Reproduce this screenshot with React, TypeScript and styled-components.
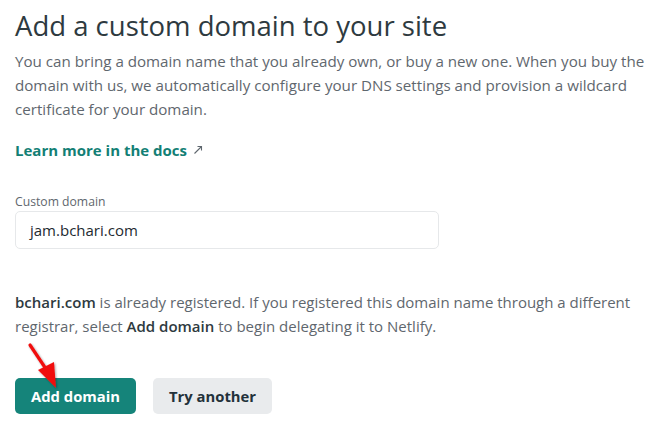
import React from "react";
import styled, { createGlobalStyle } from "styled-components";

const GlobalStyle = createGlobalStyle`
  html, body {
    margin: 0;
    padding: 0;
    background: #ffffff;
  }
  body {
    font-family: "Open Sans", "Noto Sans", sans-serif;
    -webkit-font-smoothing: antialiased;
  }
`;

const Page = styled.div`
  position: relative;
  width: 660px;
  height: 430px;
  padding: 8px 8px 0 15px;
  box-sizing: border-box;
  overflow: hidden;
`;

const Title = styled.h1`
  margin: 0;
  font-size: 27.5px;
  line-height: 36px;
  font-weight: 400;
  color: #2e3a40;
`;

const Lead = styled.p`
  margin: 5px 0 0 0;
  font-size: 15.15px;
  line-height: 24px;
  color: #5f676e;
`;

const DocsLink = styled.a`
  display: inline-flex;
  align-items: center;
  gap: 6px;
  margin-top: 17px;
  font-size: 15px;
  line-height: 24px;
  font-weight: 700;
  color: #137f75;
  text-decoration: none;
`;

const Field = styled.div`
  display: flex;
  flex-direction: column;
  margin-top: 31px;
  width: 424px;
`;

const Label = styled.label`
  font-size: 12.2px;
  line-height: 18px;
  color: #5f676e;
  margin-bottom: 0;
`;

const Input = styled.div`
  height: 38px;
  box-sizing: border-box;
  border: 1.5px solid #e6e8ea;
  border-radius: 5px;
  padding: 0 14px;
  display: flex;
  align-items: center;
  font-size: 15px;
  color: #1e2a30;
`;

const Notice = styled.p`
  margin: 41px 0 0 0;
  font-size: 15px;
  line-height: 24px;
  color: #5f676e;

  strong {
    font-weight: 600;
    color: #2e3a40;
  }
`;

const Actions = styled.div`
  display: flex;
  gap: 17px;
  margin-top: 40px;
`;

const Button = styled.button<{ $primary?: boolean }>`
  height: 36px;
  padding: 0 16px;
  border: none;
  border-radius: 5px;
  font-family: inherit;
  font-size: 14.8px;
  font-weight: 700;
  background: ${(p) => (p.$primary ? "#15847a" : "#e9ebed")};
  color: ${(p) => (p.$primary ? "#ffffff" : "#23313a")};
  cursor: pointer;
`;

const Arrow = styled.svg`
  position: absolute;
  left: 24px;
  top: 340px;
  pointer-events: none;
`;

const App: React.FC = () => (
  <Page>
    <GlobalStyle />
    <Title>Add a custom domain to your site</Title>
    <Lead>
      You can bring a domain name that you already own, or buy a new one. When you buy the
      domain with us, we automatically configure your DNS settings and provision a wildcard
      certificate for your domain.
    </Lead>
    <DocsLink href="#">
      Learn more in the docs
      <svg width="10" height="10" viewBox="0 0 10 10" fill="none" stroke="#5f676e" strokeWidth="1.1">
        <path d="M1.5 8.5 L8.5 1.5 M4.5 1.5 H8.5 V5.5" />
      </svg>
    </DocsLink>
    <Field>
      <Label>Custom domain</Label>
      <Input>jam.bchari.com</Input>
    </Field>
    <Notice>
      <strong>bchari.com</strong> is already registered. If you registered this domain name through a different
      registrar, select <strong>Add domain</strong> to begin delegating it to Netlify.
    </Notice>
    <Actions>
      <Button $primary>Add domain</Button>
      <Button>Try another</Button>
    </Actions>
    <Arrow width="44" height="56" viewBox="0 0 44 56">
      <defs>
        <filter id="sh" x="-30%" y="-30%" width="160%" height="160%">
          <feDropShadow dx="1" dy="1" stdDeviation="1" floodColor="#000" floodOpacity="0.35" />
        </filter>
      </defs>
      <g filter="url(#sh)">
        <line x1="6" y1="5" x2="24" y2="32" stroke="#f01010" strokeWidth="3.2" strokeLinecap="round" />
        <polygon points="14,30 30,22 32,48" fill="#f01010" />
      </g>
    </Arrow>
  </Page>
);

export default App;
